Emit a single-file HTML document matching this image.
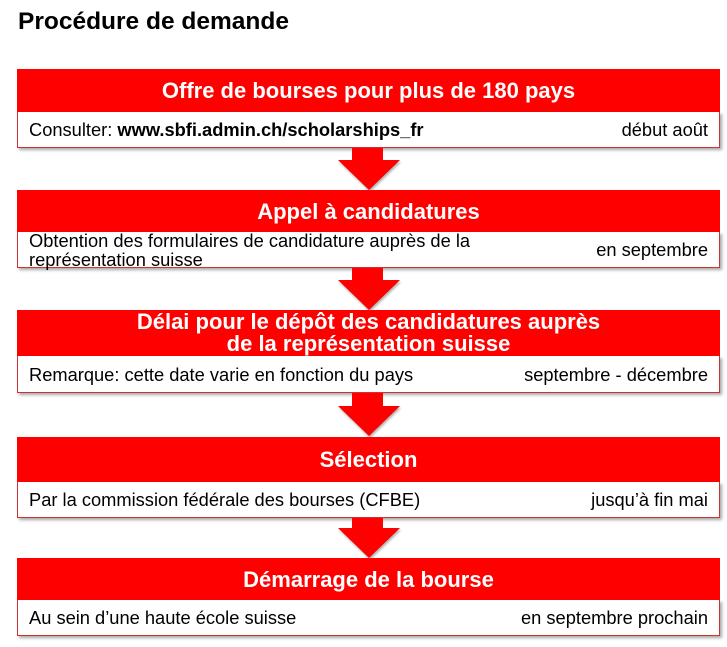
<!DOCTYPE html>
<html><head><meta charset="utf-8"><style>
body{margin:0;width:727px;height:647px;background:#fff;position:relative;overflow:hidden;font-family:"Liberation Sans",Arial,sans-serif}
h1{position:absolute;left:18px;top:8px;margin:0;font-size:24.5px;font-weight:bold;color:#000}
.red{position:absolute;left:17px;width:703px;background:#f00;color:#fff;font-weight:bold;font-size:22px;text-align:center;line-height:23px;display:flex;align-items:center;justify-content:center}
.wh{position:absolute;left:17px;background:#fff;border:1px solid #c33;border-top:none;box-shadow:2px 2px 3px rgba(0,0,0,.35);font-size:18.3px;color:#000;display:flex;align-items:center;justify-content:space-between;padding:0 11px 0 11px;box-sizing:border-box;width:703px;line-height:19px}
.ar{position:absolute;left:338px;width:62px}
.ar .s{position:absolute;left:14px;width:31px;top:0;background:#f00}
.ar .t{position:absolute;left:0;width:0;height:0;border-left:31px solid transparent;border-right:31px solid transparent;border-top:30px solid #f00;filter:drop-shadow(1px 2px 1px rgba(0,0,0,.3))}
</style></head><body>
<h1>Procédure de demande</h1>

<div class="red" style="top:69px;height:43px">Offre de bourses pour plus de 180 pays</div>
<div class="wh" style="top:112px;height:36px"><span>Consulter: <b>www.sbfi.admin.ch/scholarships_fr</b></span><span>début août</span></div>
<div class="ar" style="top:148px;height:42px"><div class="s" style="height:13px"></div><div class="t" style="top:12px"></div></div>

<div class="red" style="top:190px;height:42px">Appel à candidatures</div>
<div class="wh" style="top:232px;height:36px"><span>Obtention des formulaires de candidature auprès de la<br>représentation suisse</span><span>en septembre</span></div>
<div class="ar" style="top:268px;height:42px"><div class="s" style="height:13px"></div><div class="t" style="top:12px"></div></div>

<div class="red" style="top:310px;height:46px;line-height:22px">Délai pour le dépôt des candidatures auprès<br>de la représentation suisse</div>
<div class="wh" style="top:356px;height:37px"><span>Remarque: cette date varie en fonction du pays</span><span>septembre - décembre</span></div>
<div class="ar" style="top:393px;height:44px"><div class="s" style="height:14px"></div><div class="t" style="top:13px"></div></div>

<div class="red" style="top:437px;height:45px">Sélection</div>
<div class="wh" style="top:482px;height:36px"><span>Par la commission fédérale des bourses (CFBE)</span><span>jusqu’à fin mai</span></div>
<div class="ar" style="top:518px;height:40px"><div class="s" style="height:11px"></div><div class="t" style="top:10px"></div></div>

<div class="red" style="top:558px;height:42px">Démarrage de la bourse</div>
<div class="wh" style="top:600px;height:36px"><span>Au sein d’une haute école suisse</span><span>en septembre prochain</span></div>
</body></html>
